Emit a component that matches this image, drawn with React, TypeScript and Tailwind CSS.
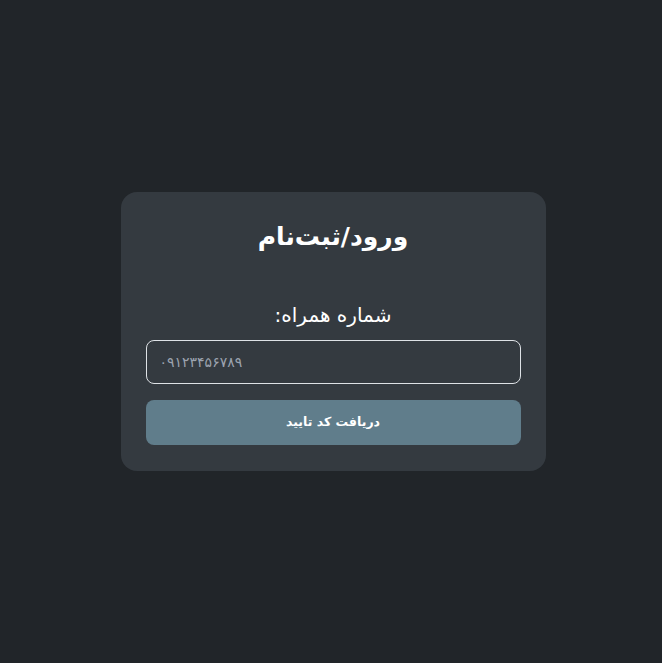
export default function App() {
  return (
    <div
      dir="rtl"
      className="min-h-screen bg-[#212529] flex items-center justify-center"
      style={{ fontFamily: '"DejaVu Sans", "Noto Sans", sans-serif' }}
    >
      <div className="w-[425px] ml-[4px] bg-[#343a40] rounded-[16px] px-[25px] pt-[23px] pb-[26px]">
        <h1 className="text-center text-white font-bold text-[25px] leading-[44px]">ورود/ثبت‌نام</h1>
        <label className="block text-center text-white text-[20px] leading-[30px] mt-[41px] mb-[10px]">
          شماره همراه:
        </label>
        <input
          type="text"
          dir="ltr"
          placeholder="۰۹۱۲۳۴۵۶۷۸۹"
          className="block w-full h-[44px] rounded-[8px] border border-[#dee2e6] bg-transparent px-[13px] text-white text-[14px] placeholder:text-[#9ca3af] outline-none"
        />
        <button className="block w-full h-[45px] mt-[16px] rounded-[8px] bg-[#607d8b] text-white font-bold text-[12.5px]">
          دریافت کد تایید
        </button>
      </div>
    </div>
  );
}
